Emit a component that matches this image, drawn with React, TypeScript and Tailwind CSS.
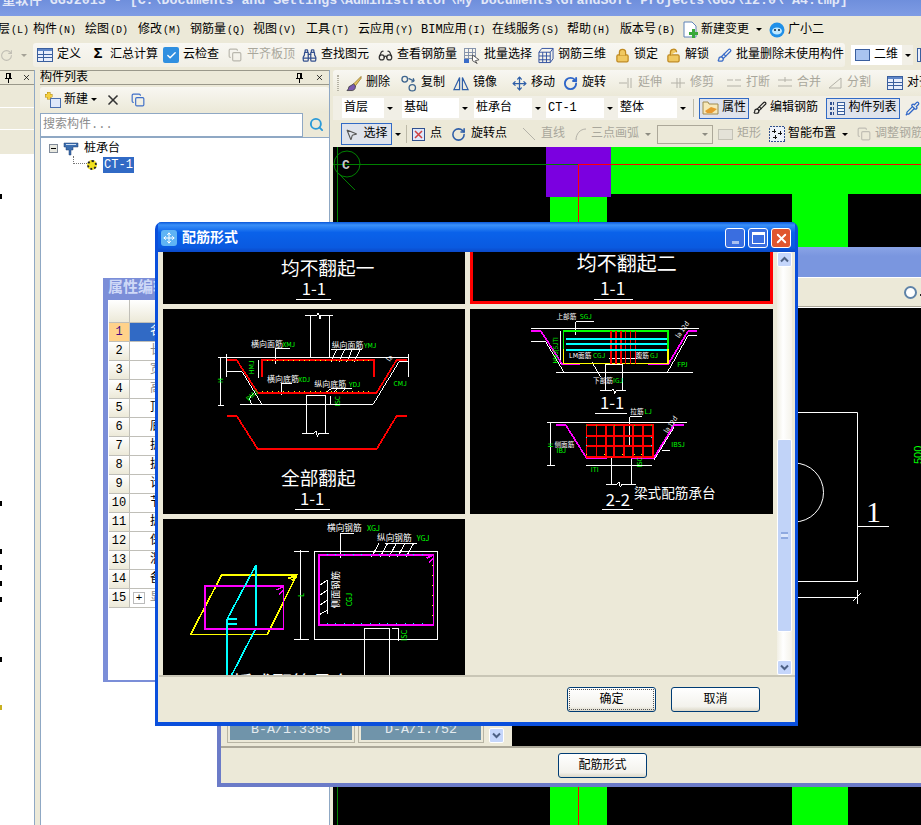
import { ReactNode } from 'react';
import {
    Binoculars,
    Brush,
    Check,
    Copy,
    Glasses,
    Lock,
    LockOpen,
    MousePointer2,
    Move,
    Pipette,
    RotateCw,
    Search,
    X,
} from 'lucide-react';

const Caret = ({ className = '' }: { className?: string }) => (
    <span
        className={`inline-block h-0 w-0 border-x-[3px] border-t-[3px] border-x-transparent border-t-black ${className}`}
    />
);

const TableIcon = () => (
    <svg width="16" height="14" viewBox="0 0 16 14" shapeRendering="crispEdges">
        <rect x="0.5" y="0.5" width="15" height="13" fill="#e8eefc" stroke="#3a5f9e" />
        <rect x="1" y="1" width="14" height="2" fill="#5f86c8" />
        <path d="M1 6.5H15M1 9.5H15M6.5 3V13" stroke="#3a5f9e" />
    </svg>
);

const PinIcon = () => (
    <svg width="7" height="10" viewBox="0 0 7 10" shapeRendering="crispEdges">
        <path d="M1.5 0.5H5.5V5.5H1.5ZM4 1V5M0 5.5H7M3.5 6V10" fill="none" stroke="#000" />
    </svg>
);

const BatchIcon = () => (
    <svg width="17" height="17" viewBox="0 0 17 17" fill="none" shapeRendering="crispEdges">
        <path d="M1 1H12V12H1ZM1 5H12M1 9H12M5 1V12M9 1V12" stroke="#7f8ea8" />
        <path d="M0 12H5V16H0Z" fill="#3a6cc8" />
        <path d="M9 8L16 13L12 14L14 17L9 14Z" fill="#fff" stroke="#555" shapeRendering="auto" />
    </svg>
);

const RebarIcon = () => (
    <svg width="17" height="17" viewBox="0 0 17 17" fill="none" stroke="#2f4f9e">
        <path d="M1 5H13L16 1M1 16H13L16 12V1H4L1 5V16M13 5V16M5 5V16M9 5V16M1 9H13M1 13H13" />
    </svg>
);

const CopyCircles = () => (
    <svg width="17" height="17" viewBox="0 0 17 17" fill="none" stroke="#3f668f" strokeWidth="1.4">
        <circle cx="4" cy="4" r="3" />
        <circle cx="12" cy="13" r="3.4" />
        <path d="M8 3L14 6M14 6L11 7M14 6L13 3" />
    </svg>
);

const MirrorIcon = () => (
    <svg width="17" height="17" viewBox="0 0 17 17" fill="none" stroke="#2f5fa8" strokeWidth="1.3">
        <path d="M7 2V15H1ZM10 2V15H16Z" />
    </svg>
);

const BrushPaint = () => (
    <svg width="17" height="17" viewBox="0 0 17 17" fill="none">
        <path d="M16 1L8 9L10 11L16 3Z" fill="#e8c860" stroke="#8a6a20" strokeWidth="0.8" />
        <path d="M8 9L3 12C3 14 2 15 1 16H7C10 15 10 13 10 11Z" fill="#7a5ab0" stroke="#333" strokeWidth="0.8" />
    </svg>
);

const PropIcon = () => (
    <svg width="17" height="14" viewBox="0 0 17 14">
        <path d="M1 1H6L7 3H16V13H1Z" fill="#f7e8b8" stroke="#a08a50" />
        <path d="M3 10L9 6L15 8L10 12H5Z" fill="#e89a30" />
    </svg>
);

const ListIcon = () => (
    <svg width="16" height="15" viewBox="0 0 16 15" shapeRendering="crispEdges">
        <rect x="8.5" y="1.5" width="7" height="12" fill="#f4f7fd" stroke="#3a5f9e" />
        <path d="M9 4.5H15M9 7.5H15M9 10.5H15" stroke="#3a5f9e" />
        <path d="M1 2H5M1 7H5M1 12H5" stroke="#30508f" strokeWidth="3" strokeDasharray="2 1" />
    </svg>
);

const CrossBox = () => (
    <svg width="13" height="13" viewBox="0 0 13 13" shapeRendering="crispEdges">
        <rect x="0.5" y="0.5" width="12" height="12" fill="#dfe8fa" stroke="#30508f" />
        <path d="M3 3L10 10M10 3L3 10" stroke="#d04040" strokeWidth="1.5" shapeRendering="auto" />
    </svg>
);

const SmartIcon = () => (
    <svg width="16" height="16" viewBox="0 0 16 16" shapeRendering="crispEdges">
        <rect x="0.5" y="0.5" width="15" height="15" fill="#eef2fa" stroke="#30508f" strokeDasharray="2 1" />
        <path d="M5 3V7M3 5H7M11 5V9M9 7H13M6 9V13M4 11H8" stroke="#111" />
    </svg>
);

const Grip = () => (
    <span className="ml-[4px] mr-[7px] h-[16px] w-[2px] shrink-0 border-x border-dotted border-[#b5b2a4]" />
);

const Sep = () => <span className="mx-[5px] h-[18px] w-px shrink-0 bg-[#bdbaa8]" />;

type ToolItem = { icon: ReactNode; label: string; cls: string; off?: boolean };

const Tool = ({ icon, label, cls, off }: ToolItem) => (
    <div className={`flex shrink-0 items-center gap-[4px] ${cls} ${off ? 'text-[#a9a79c]' : 'text-black'}`}>
        <span className="flex w-[16px] shrink-0 items-center justify-center">{icon}</span>
        <span className="whitespace-nowrap">{label}</span>
    </div>
);

const Combo = ({ text, cls, icon }: { text: string; cls: string; icon?: ReactNode }) => (
    <div className={`flex h-[20px] shrink-0 items-center bg-white pl-[2px] ${cls}`}>
        {icon}
        <span className="flex-1 whitespace-nowrap">{text}</span>
        <span className="flex h-full w-[11px] items-center justify-center bg-[#f1efe6]">
            <Caret />
        </span>
    </div>
);

const ghostLine = (d: string) => (
    <svg width="16" height="16" viewBox="0 0 16 16" fill="none" stroke="#b4b2a8">
        <path d={d} />
    </svg>
);

const menus = [
    { t: '层', k: '(L)', cls: 'w-[35px] -ml-[2px]' },
    { t: '构件', k: '(N)', cls: 'w-[52px]' },
    { t: '绘图', k: '(D)', cls: 'w-[53px]' },
    { t: '修改', k: '(M)', cls: 'w-[52px]' },
    { t: '钢筋量', k: '(Q)', cls: 'w-[63px]' },
    { t: '视图', k: '(V)', cls: 'w-[53px]' },
    { t: '工具', k: '(T)', cls: 'w-[52px]' },
    { t: '云应用', k: '(Y)', cls: 'w-[63px]' },
    { t: 'BIM应用', k: '(I)', cls: 'w-[71px]' },
    { t: '在线服务', k: '(S)', cls: 'w-[75px]' },
    { t: '帮助', k: '(H)', cls: 'w-[53px]' },
    { t: '版本号', k: '(B)', cls: 'w-[63px]' },
];

const toolbarOne: ToolItem[] = [
    { icon: <TableIcon />, label: '定义', cls: 'w-[53px]' },
    { icon: <span className="text-[15px] font-bold">Σ</span>, label: '汇总计算', cls: 'w-[73px]' },
    {
        icon: (
            <span className="flex h-[16px] w-[16px] items-center justify-center rounded-[2px] bg-[#2f8fe0]">
                <Check size={11} color="#fff" strokeWidth={3} />
            </span>
        ),
        label: '云检查',
        cls: 'w-[64px]',
    },
    { icon: <Copy size={14} color="#b9b7ad" />, label: '平齐板顶', cls: 'w-[74px]', off: true },
    { icon: <Binoculars size={15} color="#34508f" />, label: '查找图元', cls: 'w-[76px]' },
    { icon: <Glasses size={15} color="#333" />, label: '查看钢筋量', cls: 'w-[87px]' },
    { icon: <BatchIcon />, label: '批量选择', cls: 'w-[74px]' },
    { icon: <RebarIcon />, label: '钢筋三维', cls: 'w-[76px]' },
    { icon: <Lock size={15} color="#c08a20" fill="#f0c860" />, label: '锁定', cls: 'w-[51px]' },
    { icon: <LockOpen size={15} color="#c08a20" fill="#f0c860" />, label: '解锁', cls: 'w-[51px]' },
    { icon: <Brush size={15} color="#3a6cc8" />, label: '批量删除未使用构件', cls: 'w-[135px]' },
];

const toolbarTwo: ToolItem[] = [
    { icon: <BrushPaint />, label: '删除', cls: 'w-[55px]' },
    { icon: <CopyCircles />, label: '复制', cls: 'w-[52px]' },
    { icon: <MirrorIcon />, label: '镜像', cls: 'w-[58px]' },
    { icon: <Move size={15} color="#2f5fa8" />, label: '移动', cls: 'w-[51px]' },
    { icon: <RotateCw size={15} color="#2f66c8" strokeWidth={3} />, label: '旋转', cls: 'w-[56px]' },
    { icon: ghostLine('M1 8H9M10 3V13M13 3V13'), label: '延伸', cls: 'w-[52px]', off: true },
    { icon: ghostLine('M1 8H15M7 3V13M10 3V13'), label: '修剪', cls: 'w-[56px]', off: true },
    { icon: ghostLine('M1 5H7M9 5H15M1 11H15'), label: '打断', cls: 'w-[51px]', off: true },
    { icon: ghostLine('M1 5H15M1 11H15M8 2V7'), label: '合并', cls: 'w-[50px]', off: true },
    { icon: ghostLine('M2 13H14V3L2 13'), label: '分割', cls: 'w-[60px]', off: true },
    { icon: <TableIcon />, label: '对齐', cls: 'w-[40px]' },
];

const propRows = [
    '名称', '长度', '宽度', '高度', '顶标高', '底标高', '扩展', '扩展', '计算', '节点', '扩展', '保护', '混凝土', '备注',
];

const White = ({ d, w = 3 }: { d: string; w?: number }) => <path d={d} fill="none" stroke="#fff" strokeWidth={w} />;
const Line = ({ d, c, w = 5 }: { d: string; c: string; w?: number }) => (
    <path d={d} fill="none" stroke={c} strokeWidth={w} />
);
const Lab = ({ x, y, s = 24, c = '#fff', children, r }: { x: number; y: number; s?: number; c?: string; children: string; r?: number }) => (
    <text x={x} y={y} fontSize={s} fill={c} transform={r ? `rotate(${r} ${x} ${y})` : undefined}>
        {children}
    </text>
);
const Dots = ({ xs, y, c, h }: { xs: number[]; y: number; c: string; h?: boolean }) => (
    <>
        {xs.map((v, i) => (
            <rect key={i} x={h ? y : v} y={h ? v : y} width="3" height="3" fill={c} />
        ))}
    </>
);

const range = (a: number, b: number, step: number) => {
    const out: number[] = [];
    for (let v = a; v <= b; v += step) out.push(v);
    return out;
};

const cadFont = "font-['Noto_Sans_CJK_SC',sans-serif]";

const TitleCellLeft = () => (
    <svg viewBox="24 96 906 156" className={`block h-[52px] w-[302px] bg-black ${cadFont}`} shapeRendering="crispEdges">
        <Lab x={378} y={164} s={56}>均不翻起一</Lab>
        <Lab x={440} y={226} s={50}>1-1</Lab>
        <White d="M423 238H528" />
    </svg>
);

const TitleCellRight = () => (
    <div className="border-x-[3px] border-b-[3px] border-[#ff0000] bg-black">
        <svg viewBox="24 96 891 147" className={`block h-[49px] w-[297px] ${cadFont}`} shapeRendering="crispEdges">
            <Lab x={335} y={154} s={60}>均不翻起二</Lab>
            <Lab x={405} y={226} s={52}>1-1</Lab>
            <White d="M387 238H503" />
        </svg>
    </div>
);

const FullBentCell = () => (
    <svg viewBox="24 266 906 616" className={`block h-[205px] w-[302px] bg-black ${cadFont}`} shapeRendering="crispEdges">
        <White d="M450 285H485L490 278L495 295L498 285H533M466 285V412M525 285V412" />
        <White d="M197 412H762" />
        <White d="M215 455H262L320 552M255 552H655L732 425H758M197 412V555M188 412H208M188 555H208M762 400V470M215 400V470" />
        <White d="M453 640V527H513V640M440 640H478L483 632L487 650L491 640H522M528 527V552" />
        <White d="M360 385H405M360 385V430M378 490H410M378 490V524M528 388H620M528 425L545 388M552 425L569 388M575 425L592 388M598 425L615 388" />
        <White d="M510 518L530 505H590M535 518L548 505M560 518L573 505" />
        <White d="M310 420V472M290 552C282 540 280 530 298 518" />
        <Line d="M216 420H245L308 518H665L725 420H757" c="#ff0000" />
        <Line d="M320 470V420H657V470" c="#ff0000" />
        <Dots xs={range(335, 650, 16)} y={420} c="#ffff00" />
        <Dots xs={range(320, 650, 16)} y={513} c="#ffff00" />
        <Line d="M216 588H245L308 687H665L725 588H757" c="#ff0000" />
        <Lab x={288} y={379}>横向面筋</Lab>
        <Lab x={382} y={379} s={20} c="#00ff00">XMJ</Lab>
        <Lab x={530} y={382}>纵向面筋</Lab>
        <Lab x={627} y={382} s={20} c="#00ff00">YMJ</Lab>
        <Lab x={336} y={484}>横向底筋</Lab>
        <Lab x={430} y={484} s={20} c="#00ff00">XDJ</Lab>
        <Lab x={478} y={499}>纵向底筋</Lab>
        <Lab x={582} y={499} s={20} c="#00ff00">YDJ</Lab>
        <Lab x={716} y={496} s={20} c="#00ff00">CMJ</Lab>
        <Lab x={298} y={462} s={20} c="#00ff00" r={-90}>HMJ</Lab>
        <Lab x={204} y={488} s={20} c="#00ff00" r={-90}>H</Lab>
        <Lab x={282} y={545} s={20} c="#00ff00" r={-45}>PMJ</Lab>
        <Lab x={555} y={558} s={20} c="#00ff00" r={-90}>ISC</Lab>
        <Lab x={705} y={425} s={20} r={-55}>la</Lab>
        <Lab x={378} y={795} s={56}>全部翻起</Lab>
        <Lab x={435} y={855} s={50}>1-1</Lab>
        <White d="M420 867H525" />
    </svg>
);

const BeamCell = () => (
    <svg viewBox="15 266 905 616" className={`block h-[205px] w-[303px] bg-black ${cadFont}`} shapeRendering="crispEdges">
        <White d="M195 325H700M283 333V430M270 457H683M197 365H240L295 457M605 457L668 345H695" />
        <White d="M418 432V510M470 432V510M403 512H438L443 505L447 520L450 512H480M418 432H470" />
        <White d="M330 305H385M330 305V345M378 425L405 470M430 415H515" />
        <Line d="M197 332H225L290 433H342M548 433H607L668 332H695" c="#ff00ff" />
        <Line d="M293 385V333H607V385" c="#00ff00" />
        <Line d="M293 385V430H607V385" c="#ffff00" />
        <Line d="M435 333V430M450 333V430M465 333V430M480 333V430M495 333V430M510 333V430" c="#ff0000" />
        <Line d="M300 356H605M300 372H605M300 390H605" c="#00ffff" />
        <Lab x={272} y={296} s={20}>上部筋</Lab>
        <Lab x={342} y={296} s={20} c="#00ff00">SGJ</Lab>
        <Lab x={310} y={412} s={20}>LM面筋</Lab>
        <Lab x={382} y={412} s={20} c="#00ff00">CGJ</Lab>
        <Lab x={510} y={414} s={20}>腹筋</Lab>
        <Lab x={553} y={414} s={20} c="#00ff00">GJ</Lab>
        <Lab x={382} y={487} s={20}>下部筋</Lab>
        <Lab x={442} y={487} s={20} c="#00ff00">IGJ</Lab>
        <Lab x={635} y={441} s={20} c="#00ff00">FPJ</Lab>
        <Lab x={278} y={430} s={18} c="#00ff00" r={-90}>HMJ[5JTI</Lab>
        <Lab x={640} y={355} s={20} r={-55}>la 12d</Lab>
        <Lab x={403} y={566} s={50}>1-1</Lab>
        <White d="M387 580H483" />

        <White d="M250 607H665M255 607V737M245 607H268M245 737H268M362 735H558" />
        <White d="M437 713V793M497 713V793M420 793H455L460 786L464 800L468 793H510M437 713H497" />
        <White d="M492 590V680M492 590H530" />
        <White d="M565 720L625 622M590 690H612" />
        <Line d="M272 615H300L362 713H425M497 713H565L625 615H655" c="#ff00ff" />
        <Line d="M362 615H562V710H362ZM392 615V710M420 615V710M445 615V710M475 615V710M502 615V710M532 615V710M362 648H562M362 677H562" c="#ff0000" />
        <Dots xs={[362, 415, 470, 504, 527]} y={701} c="#ffff00" />
        <Dots xs={[362, 392, 445, 504, 555]} y={614} c="#00ff00" />
        <Dots xs={[650, 676]} y={360} c="#00ffff" h />
        <Dots xs={[650, 676]} y={555} c="#00ffff" h />
        <Lab x={494} y={583} s={20}>拉筋</Lab>
        <Lab x={537} y={583} s={20} c="#00ff00">LJ</Lab>
        <Lab x={266} y={680} s={20}>侧面筋</Lab>
        <Lab x={272} y={699} s={20} c="#00ff00">IBJ</Lab>
        <Lab x={617} y={680} s={20} c="#00ff00">IBSJ</Lab>
        <Lab x={375} y={755} s={20} c="#00ff00">ITI</Lab>
        <Lab x={528} y={742} s={20} c="#00ff00" r={-90}>ISC</Lab>
        <Lab x={262} y={682} s={18} c="#00ff00" r={-90}>H</Lab>
        <Lab x={605} y={640} s={20} r={-55}>la 12d</Lab>
        <Lab x={420} y={858} s={50}>2-2</Lab>
        <White d="M408 868H503" />
        <Lab x={505} y={834} s={41}>梁式配筋承台</Lab>
    </svg>
);

const RaftCell = () => (
    <svg viewBox="24 12 906 468" className={`block h-[156px] w-[302px] bg-black ${cadFont}`} shapeRendering="crispEdges">
        <Line d="M200 180H425L337 358H107Z" c="#ffff00" />
        <Line d="M400 190L425 182M410 196L425 186" c="#ffff00" />
        <Line d="M150 212H385V342H150Z" c="#ff00ff" />
        <Line d="M365 225L385 215M372 238L385 225" c="#ff00ff" />
        <Line d="M303 150V333M303 150L215 315V480M300 345L230 480M215 312H245M215 326H245" c="#00ffff" />
        <White d="M478 110H848V373H478ZM437 105V375M417 108H462M417 373H462M628 480V340H703V480M710 340H730V378" />
        <White d="M555 55H597M555 55V130M690 85H785M650 125L672 85M676 125L698 85M702 125L724 85M728 125L750 85M754 125L776 85" />
        <White d="M518 195V298M495 210L518 195M495 240L518 225M495 270L518 255M495 298L518 285" />
        <Line d="M492 120H835V330H492Z" c="#ff00ff" />
        <Line d="M815 130L835 120M822 142L835 130" c="#ff00ff" />
        <Dots xs={range(515, 825, 26)} y={118} c="#00ffff" />
        <Dots xs={range(515, 825, 26)} y={324} c="#00ffff" />
        <Dots xs={range(150, 320, 30)} y={830} c="#ffff00" h />
        <Lab x={516} y={48} s={26}>横向钢筋</Lab>
        <Lab x={636} y={48} s={22} c="#00ff00">XGJ</Lab>
        <Lab x={666} y={78} s={26}>纵向钢筋</Lab>
        <Lab x={785} y={78} s={22} c="#00ff00">YGJ</Lab>
        <Lab x={552} y={280} s={28} r={-90}>侧面钢筋</Lab>
        <Lab x={590} y={274} s={22} c="#00ff00" r={-90}>CGJ</Lab>
        <Lab x={446} y={246} s={22} c="#00ff00" r={-90}>L</Lab>
        <Lab x={757} y={378} s={22} c="#00ff00" r={-90}>ISC</Lab>
        <Lab x={232} y={529} s={60}>板式配筋承台</Lab>
    </svg>
);

const ScrollBtn = ({ up }: { up?: boolean }) => (
    <div className="flex h-[15px] w-[15px] items-center justify-center rounded-[2px] border border-white bg-[#c5d6fb]">
        <svg width="9" height="7" viewBox="0 0 9 7" fill="none" stroke="#4d6185" strokeWidth="2">
            <path d={up ? 'M1 5.5L4.5 2L8 5.5' : 'M1 1.5L4.5 5L8 1.5'} />
        </svg>
    </div>
);

const XpButton = ({ label, focus, cls }: { label: string; focus?: boolean; cls: string }) => (
    <div
        className={`flex h-[25px] w-[89px] items-center justify-center rounded-[3px] border border-[#003c74] bg-[linear-gradient(180deg,#ffffff,#f3f2ec_80%,#dcd8c8)] text-[12px] text-black ${cls}`}
    >
        <span className={focus ? 'flex h-[21px] w-[85px] items-center justify-center border border-dotted border-[#555]' : ''}>
            {label}
        </span>
    </div>
);

const Dialog = () => (
    <div className="absolute left-[155px] top-[222px] flex h-[504px] w-[643px] flex-col overflow-hidden rounded-t-[7px] bg-[#0a4fdc] px-[3px] pb-[4px]">
        <div className="flex h-[30px] shrink-0 items-center bg-[linear-gradient(180deg,#0a57d8,#3a90f8_10%,#0a62ea_35%,#0a5ae0_85%,#0a48c8)] pr-[3px] pt-[2px]">
            <span className="ml-[3px] flex h-[16px] w-[16px] items-center justify-center rounded-[3px] bg-[#5fb4f4]">
                <Move size={12} color="#fff" />
            </span>
            <span className="ml-[5px] flex-1 text-[14px] font-bold text-white">配筋形式</span>
            <span className="flex h-[20px] w-[20px] items-end justify-center rounded-[3px] border border-white bg-[#3a6ee0] pb-[3px]">
                <span className="h-[3px] w-[7px] bg-[#a9c0f0]" />
            </span>
            <span className="ml-[3px] flex h-[20px] w-[20px] items-center justify-center rounded-[3px] border border-white bg-[#3a6ee0]">
                <span className="h-[12px] w-[13px] border-x border-b border-t-[3px] border-white" />
            </span>
            <span className="ml-[3px] mr-[1px] flex h-[20px] w-[20px] items-center justify-center rounded-[3px] border border-white bg-[#e0562f]">
                <X size={15} color="#fff" strokeWidth={3} />
            </span>
        </div>
        <div className="flex min-h-0 flex-1 flex-col bg-[#ece9d8] pl-px">
            <div className="flex h-[423px] shrink-0 pl-[4px]">
                <div className="grid w-[610px] shrink-0 grid-cols-[302px_303px] grid-rows-[52px_205px_156px] gap-x-[5px] gap-y-[5px] overflow-hidden">
                    <TitleCellLeft />
                    <TitleCellRight />
                    <FullBentCell />
                    <BeamCell />
                    <RaftCell />
                    <div />
                </div>
                <div className="ml-[4px] flex w-[15px] shrink-0 flex-col bg-[linear-gradient(90deg,#f1efe4,#ffffff_40%,#f4f2ea)]">
                    <ScrollBtn up />
                    <div className="mt-[172px] flex h-[193px] items-center justify-center rounded-[2px] border border-white bg-[#c1d3f8]">
                        <span className="h-[7px] w-[7px] border-y-2 border-[#8fa9e0] bg-[#dce6fb]" />
                    </div>
                    <div className="flex-1" />
                    <ScrollBtn />
                </div>
            </div>
            <div className="flex flex-1 items-center border-t-2 border-[#c9c6b6] pl-[408px]">
                <XpButton label="确定" focus cls="" />
                <XpButton label="取消" cls="ml-[15px]" />
            </div>
        </div>
    </div>
);

const PropertyWindow = () => (
    <div className="absolute left-[103px] top-[278px] flex h-[404px] w-[115px] flex-col bg-[#7b8ed8] px-[5px] pb-[2px] text-[12px]">
        <div className="flex h-[22px] shrink-0 items-center whitespace-nowrap text-[15px] font-bold text-[#cfd9f7]">属性编辑器</div>
        <div className="flex-1 overflow-hidden bg-white pl-px">
            <div className="flex h-[23px] border-b border-[#c0bfb8]">
                <div className="w-[21px] border-r border-[#c0bfb8] bg-[linear-gradient(180deg,#ffffff,#ece9d8)]" />
                <div className="flex-1 bg-[linear-gradient(180deg,#ffffff,#ece9d8)]" />
            </div>
            {propRows.map((label, i) => (
                <div key={i} className="flex h-[19px] border-b border-[#c0bfb8]">
                    <div
                        className={`flex w-[21px] items-center justify-center border-r border-[#c0bfb8] ${i === 0 ? 'bg-[#ffd28a] text-[#4a0a80]' : 'bg-[linear-gradient(180deg,#ffffff,#ece9d8)] text-black'}`}
                    >
                        {i + 1}
                    </div>
                    <div
                        className={`flex-1 whitespace-nowrap pl-[20px] leading-[18px] ${i === 0 ? 'bg-[#316ac5] text-white' : i < 4 ? 'text-[#8a8a8a]' : 'text-black'}`}
                    >
                        {label}
                    </div>
                </div>
            ))}
            <div className="flex h-[19px] border-b border-[#c0bfb8]">
                <div className="flex w-[21px] items-center justify-center border-r border-[#c0bfb8] bg-[linear-gradient(180deg,#ffffff,#ece9d8)]">
                    15
                </div>
                <div className="flex flex-1 items-center whitespace-nowrap pl-[3px] text-[#8a8a8a]">
                    <span className="mr-[5px] flex h-[12px] w-[12px] items-center justify-center border border-[#bbb] text-[11px] leading-none text-black">
                        +
                    </span>
                    显示样式
                </div>
            </div>
        </div>
    </div>
);

const SecondWindow = () => (
    <div className="absolute left-[217px] top-[247px] flex h-[540px] w-[720px] flex-col bg-[#6b7bc8] px-[4px] pb-[4px]">
        <div className="h-[30px] shrink-0 bg-[linear-gradient(180deg,#8aa4e6,#7a96df_30%,#7a96df)]" />
        <div className="flex h-[30px] shrink-0 items-center gap-[3px] border-y border-t-white border-b-[#aca899] bg-[#ece9d8] pl-[683px] pt-px">
            <span className="h-[13px] w-[13px] rounded-full border-2 border-[#5f83a8] bg-white" />
            <span className="mt-[4px] h-[2px] w-[2px] bg-[#222]" />
        </div>
        <div className="flex min-h-0 flex-1 border-t border-white">
            <div className="flex w-[291px] shrink-0 items-end bg-[#ece9d8] pb-[3px] text-[13.3px] leading-none text-[#e4ebf0]">
                <div className="ml-[6px] h-[22px] w-[128px] border border-[#b8b5a4] p-[2px]">
                    <div className="flex h-full w-full items-end justify-center bg-[#7094aa] pb-[4px] font-['Liberation_Mono',monospace]">B-A/1.3385</div>
                </div>
                <div className="ml-[3px] h-[22px] w-[126px] border border-[#b8b5a4] p-[2px]">
                    <div className="flex h-full w-full items-end justify-center bg-[#7094aa] pb-[4px] font-['Liberation_Mono',monospace]">D-A/1.752</div>
                </div>
                <div className="ml-[5px]">
                    <ScrollBtn />
                </div>
            </div>
            <svg viewBox="512 308 421 438" className={`block h-[438px] w-[421px] shrink-0 bg-black ${cadFont}`}>
                <path d="M512 412.5H857.5V581.5H700M794 463A29.5 29.5 0 0 1 794 522M858 526.5H889M700 597.5H857M857.5 590V604M853 601L861 593" fill="none" stroke="#fff" />
                <text x="866" y="522" fontSize="30" fill="#fff" fontFamily="Liberation Serif">1</text>
                <text x="922" y="464" fontSize="11" fill="#00ff00" transform="rotate(-90 922 464)" fontFamily="Liberation Sans">500</text>
            </svg>
        </div>
        <div className="flex h-[37px] shrink-0 items-center border-t-2 border-[#aca899] bg-[#ece9d8] pl-[337px]">
            <XpButton label="配筋形式" cls="" />
        </div>
    </div>
);

const Canvas = () => (
    <svg viewBox="333 147 588 678" className="block h-full w-full bg-black" shapeRendering="crispEdges">
        <rect x="546" y="147" width="65" height="50" fill="#7b00e0" />
        <rect x="611" y="147" width="310" height="47" fill="#00ff00" />
        <rect x="550" y="197" width="57" height="40" fill="#00ff00" />
        <rect x="792" y="194" width="56" height="60" fill="#00ff00" />
        <rect x="550" y="787" width="57" height="38" fill="#00ff00" />
        <rect x="792" y="787" width="56" height="38" fill="#00ff00" />
        <path d="M333 164H578M337 147V825" stroke="#008000" />
        <path d="M578 164H921M578 164V237M578 787V825" stroke="#ff0000" />
        <circle cx="347" cy="164" r="13" fill="none" stroke="#008000" shapeRendering="auto" />
        <path d="M337 172L355 190" stroke="#008000" />
        <text x="342" y="169" fontSize="13" fontWeight="700" fill="#c8c8c8" fontFamily="Liberation Mono">C</text>
    </svg>
);

export default function App() {
    return (
        <div className="relative flex h-[825px] w-[921px] flex-col overflow-hidden bg-[#ece9d8] font-['Liberation_Mono','Noto_Sans_CJK_SC',monospace] text-[12px] text-black">
            <div className="h-[16px] shrink-0 overflow-hidden bg-[linear-gradient(180deg,#6f8fdc,#7f9ce4)]">
                <div className="-mt-[8px] ml-[2px] whitespace-nowrap text-[13.3px] font-bold leading-[18px] text-[#e2e8f8]">
                    量软件 GGJ2013 - [C:\Documents and Settings\Administrator\My Documents\GrandSoft Projects\GGJ\12.0\ A4.tmp]
                </div>
            </div>

            <div className="flex h-[27px] shrink-0 items-center overflow-hidden">
                {menus.map((m) => (
                    <div key={m.t + m.k} className={`shrink-0 whitespace-nowrap ${m.cls}`}>
                        {m.t}
                        <span className="ml-[1px] text-[10px]">{m.k}</span>
                    </div>
                ))}
                <div className="flex w-[86px] shrink-0 items-center gap-[3px]">
                    <svg width="15" height="17" viewBox="0 0 15 17">
                        <path d="M1 1H9L13 5V16H1Z" fill="#fff" stroke="#5f83b8" />
                        <path d="M9 8H12V11H15V14H12V17H9V14H6V11H9Z" fill="#3aa83a" />
                    </svg>
                    <span className="whitespace-nowrap">新建变更</span>
                    <Caret className="ml-[4px]" />
                </div>
                <div className="flex items-center gap-[3px]">
                    <svg width="16" height="16" viewBox="0 0 16 16">
                        <circle cx="8" cy="8" r="7.5" fill="#2090e8" />
                        <ellipse cx="8" cy="9" rx="5" ry="3.5" fill="#bfe8ff" />
                        <circle cx="6" cy="8" r="1" fill="#123" />
                        <circle cx="10" cy="8" r="1" fill="#123" />
                    </svg>
                    <span>广小二</span>
                </div>
            </div>

            <div className="flex h-[24px] shrink-0 items-center overflow-hidden">
                <div className="flex h-full w-[33px] shrink-0 items-center justify-between pr-[6px]">
                    <RotateCw size={13} color="#c0beb4" />
                    <Caret className="opacity-30" />
                </div>
                <div className="flex h-full w-[812px] shrink-0 items-center rounded-[3px] bg-[linear-gradient(180deg,#f8f7f2,#f1efe5)] pl-[4px]">
                    {toolbarOne.map((it) => (
                        <Tool key={it.label} {...it} />
                    ))}
                </div>
                <Combo
                    text="二维"
                    cls="ml-[6px] w-[62px] pl-[4px]"
                    icon={<span className="mr-[4px] h-[12px] w-[15px] border border-[#3a5f9e] bg-[#a9c4f0]" />}
                />
                <span className="ml-[4px] h-[14px] w-[6px] border border-[#3a5f9e] bg-[#e8eefc]" />
            </div>

            <div className="mt-[3px] flex min-h-0 flex-1">
                <div className="flex w-[35px] shrink-0 flex-col border-r border-[#8fa8c4]">
                    <div className="flex h-[15px] shrink-0 items-center justify-end gap-[10px] border-y border-[#9a988a] pr-[3px]">
                        <PinIcon />
                        <X size={9} />
                    </div>
                    <div className="mt-[2px] h-[21px] shrink-0 border-b border-white" />
                    <div className="h-[22px] shrink-0 border-b border-white" />
                    <div className="h-[25px] shrink-0 border-b border-white" />
                    <div className="relative flex-1 bg-white">
                        <span className="absolute left-0 top-[39px] h-[5px] w-[2px] bg-black" />
                        <span className="absolute left-0 top-[346px] h-[5px] w-[2px] bg-black" />
                        <span className="absolute left-0 top-[394px] h-[5px] w-[2px] bg-black" />
                        <span className="absolute left-0 top-[410px] h-[5px] w-[2px] bg-black" />
                        <span className="absolute left-0 top-[426px] h-[5px] w-[2px] bg-black" />
                        <span className="absolute left-0 top-[442px] h-[5px] w-[2px] bg-black" />
                        <span className="absolute left-0 top-[502px] h-[5px] w-[2px] bg-black" />
                        <span className="absolute left-0 top-[550px] h-[5px] w-[2px] bg-[#c8b020]" />
                    </div>
                </div>

                <div className="ml-[5px] flex w-[290px] shrink-0 flex-col border-r border-[#8fa8c4]">
                    <div className="flex h-[15px] shrink-0 items-center justify-between border-y border-[#9a988a] pr-[5px] text-[12px] leading-none">
                        <span>构件列表</span>
                        <span className="flex items-center gap-[12px]">
                            <PinIcon />
                            <X size={9} />
                        </span>
                    </div>
                    <div className="mt-[2px] flex h-[25px] shrink-0 items-center gap-[2px] rounded-[3px] bg-[linear-gradient(180deg,#f8f7f2,#ece9d8)] pl-[4px]">
                        <svg width="17" height="17" viewBox="0 0 17 17" shapeRendering="crispEdges">
                            <rect x="6" y="7" width="10" height="9" fill="#dfe8fa" stroke="#4a6fb0" />
                            <path d="M3 1H6V3H8V6H6V8H3V6H1V3H3Z" fill="#f5d040" stroke="#b08a20" strokeWidth="0.5" />
                        </svg>
                        <span className="ml-px">新建</span>
                        <Caret className="ml-px" />
                        <X size={16} className="ml-[6px]" color="#333" strokeWidth={2.5} />
                        <Copy size={14} color="#3f6fc8" className="ml-[8px]" />
                    </div>
                    <div className="flex h-[25px] shrink-0 items-center">
                        <div className="flex h-[24px] w-[263px] items-center border border-[#8fa8c4] bg-white pl-[2px] text-[#8c8c8c]">
                            搜索构件...
                        </div>
                        <span className="ml-[3px] flex h-[24px] w-[20px] items-center justify-center">
                            <Search size={15} color="#2a9ad8" strokeWidth={3} />
                        </span>
                    </div>
                    <div className="relative flex-1 border-l border-t border-[#8fa8c4] bg-white">
                        <div className="ml-[8px] mt-[2px] flex h-[17px] items-center">
                            <span className="flex h-[9px] w-[9px] items-center justify-center border border-[#808a98] bg-[#e8e8e0]">
                                <span className="h-px w-[5px] bg-black" />
                            </span>
                            <svg width="16" height="16" viewBox="0 0 16 16" className="ml-[5px]">
                                <path d="M1 2H15V6H10V9H8V14H6V9H3V6H1Z" fill="#3d6fb0" stroke="#1d3f70" strokeWidth="0.5" />
                                <path d="M3 3H13V4H3Z" fill="#cfe0f5" />
                            </svg>
                            <span className="ml-[5px]">桩承台</span>
                        </div>
                        <div className="flex h-[16px] items-center">
                            <span className="ml-[32px] h-[8px] w-[14px] -translate-y-[5px] border-b border-l border-dotted border-[#777]" />
                            <span className="flex h-[10px] w-[10px] items-center justify-center rounded-full border-2 border-dotted border-[#222] bg-[#f0e020]" />
                            <span className="ml-[6px] flex h-[16px] w-[31px] items-center justify-center bg-[#316ac5] text-white">CT-1</span>
                        </div>
                    </div>
                </div>

                <div className="ml-[3px] flex min-w-0 flex-1 flex-col overflow-hidden">
                    <div className="flex h-[26px] shrink-0 items-center rounded-l-[3px] bg-[linear-gradient(180deg,#f8f7f2,#ece9d8)]">
                        <Grip />
                        {toolbarTwo.map((it) => (
                            <Tool key={it.label} {...it} />
                        ))}
                    </div>
                    <div className="flex h-[24px] shrink-0 items-center bg-[#f1efe6] pl-[9px]">
                        <Combo text=" 首层" cls="w-[53px]" />
                        <Combo text=" 基础" cls="ml-[7px] w-[68px]" />
                        <Combo text=" 桩承台" cls="ml-[4px] w-[69px]" />
                        <Combo text="CT-1" cls="ml-[3px] w-[69px]" />
                        <Combo text="整体" cls="ml-[3px] w-[70px]" />
                        <Sep />
                        <div className="flex h-[21px] w-[50px] shrink-0 items-center justify-center gap-[3px] border border-[#316ac5] bg-[#dfe3ec]">
                            <PropIcon />
                            属性
                        </div>
                        <div className="ml-[4px] flex w-[68px] shrink-0 items-center gap-[3px]">
                            <Brush size={14} color="#222" />
                            <span className="whitespace-nowrap">编辑钢筋</span>
                        </div>
                        <div className="ml-[5px] flex h-[21px] w-[74px] shrink-0 items-center justify-center gap-[3px] border border-[#316ac5] bg-[#dfe3ec]">
                            <ListIcon />
                            <span className="whitespace-nowrap">构件列表</span>
                        </div>
                        <Pipette size={15} color="#2f66c8" className="ml-[5px] shrink-0" />
                        <span className="ml-[2px] shrink-0">定</span>
                    </div>
                    <div className="flex h-[27px] shrink-0 items-center bg-[#ece9d8] pl-[8px] pt-px">
                        <div className="flex h-[22px] w-[51px] shrink-0 items-center justify-center gap-[5px] border border-[#316ac5] bg-[#dfe3ec]">
                            <MousePointer2 size={13} color="#555" />
                            选择
                        </div>
                        <Caret className="ml-[3px]" />
                        <Sep />
                        <div className="flex w-[39px] shrink-0 items-center gap-[5px]">
                            <CrossBox />点
                        </div>
                        <div className="flex w-[70px] shrink-0 items-center gap-[5px]">
                            <RotateCw size={15} color="#2f5fa8" strokeWidth={2.5} />
                            旋转点
                        </div>
                        <div className="flex w-[52px] shrink-0 items-center gap-[4px] text-[#a9a79c]">
                            {ghostLine('M2 2L14 14')}直线
                        </div>
                        <div className="flex w-[84px] shrink-0 items-center gap-[2px] text-[#a9a79c]">
                            {ghostLine('M3 14C3 8 7 3 13 3')}
                            <span className="whitespace-nowrap">三点画弧</span>
                            <Caret className="ml-[4px] opacity-40" />
                        </div>
                        <div className="flex h-[19px] w-[56px] shrink-0 items-center justify-end border border-[#aca899] pr-[4px]">
                            <Caret className="opacity-40" />
                        </div>
                        <div className="ml-[5px] flex w-[51px] shrink-0 items-center gap-[4px] text-[#a9a79c]">
                            <span className="h-[11px] w-[15px] border border-[#c4c2b6] bg-[#e4e2d8]" />矩形
                        </div>
                        <div className="flex w-[88px] shrink-0 items-center gap-[3px]">
                            <SmartIcon />
                            <span className="whitespace-nowrap">智能布置</span>
                            <Caret className="ml-[3px]" />
                        </div>
                        <div className="flex shrink-0 items-center gap-[4px] whitespace-nowrap text-[#a9a79c]">
                            <Copy size={14} color="#c0beb4" />调整钢筋
                        </div>
                    </div>
                    <div className="min-h-0 flex-1">
                        <Canvas />
                    </div>
                </div>
            </div>

            <PropertyWindow />
            <SecondWindow />
            <Dialog />
        </div>
    );
}
